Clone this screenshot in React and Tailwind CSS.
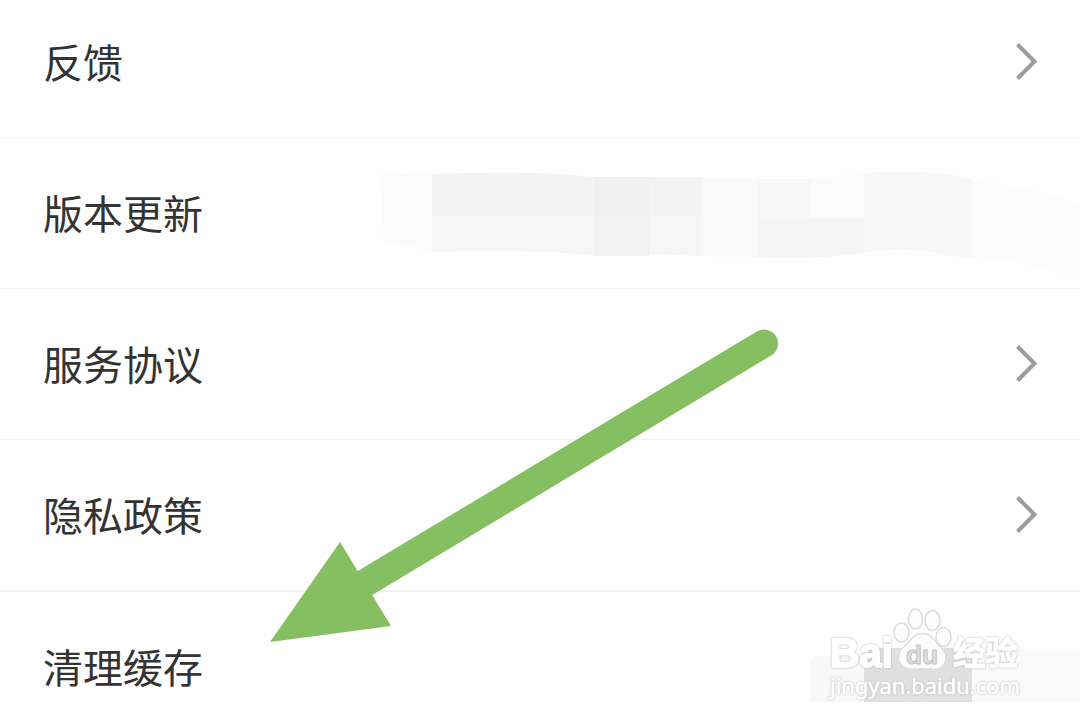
import React from "react";

const items = [
  { label: "反馈", arrow: true },
  { label: "版本更新", redacted: true },
  { label: "服务协议", arrow: true },
  { label: "隐私政策", arrow: true, thick: true },
  { label: "清理缓存" },
];

const Chevron = () => (
  <svg width="26" height="42" viewBox="0 0 26 42" fill="none" className="mr-[40px] shrink-0">
    <path d="M3.500 3.500L20.500 20.500L3.500 37.500" stroke="#9c9c9c" strokeWidth="4" />
  </svg>
);

// Smudged area hiding the version number
const VersionMask = () => (
  <svg width="702" height="120" viewBox="378 153 702 120" className="shrink-0">
    <path d="M380 175L432 173V250L384 242Z" fill="#fbfbfb" />
    <path d="M432 174Q500 171 560 174L594 177V215H432Z" fill="#f3f3f3" />
    <path d="M432 215H594V255Q520 249 432 252Z" fill="#f6f6f6" />
    <path d="M594 177H649V216H594Z" fill="#f0f0f0" />
    <path d="M594 216H649V256H594Z" fill="#f2f2f2" />
    <path d="M649 177H702V216H649Z" fill="#f3f3f3" />
    <path d="M649 216H702V256L649 254Z" fill="#f6f6f6" />
    <path d="M702 177L757 179V257L702 256Z" fill="#fafafa" />
    <path d="M757 179H811V218H757Z" fill="#f7f7f7" />
    <path d="M811 179L864 174V218H811Z" fill="#fbfbfb" />
    <path d="M757 218H864V253Q810 260 757 257Z" fill="#f5f5f5" />
    <path d="M864 173Q930 169 972 179V257L948 256Q920 246 864 252Z" fill="#f7f7f7" />
    <path d="M972 181Q1035 186 1080 205V273L1060 273Q1020 261 972 257Z" fill="#fcfcfc" />
  </svg>
);

const SettingRow = ({ label, arrow, redacted, thick }) => (
  <div
    className={`flex items-center justify-between pl-[43px] ${
      thick ? "h-[152px] border-b-2 border-[#f1f1f1]" : "h-[151px] border-b border-[#f1f1f1]"
    }`}
  >
    <span className="pb-[2px] text-[40px] leading-[60px] text-[#333333]">{label}</span>
    {arrow && <Chevron />}
    {redacted && <VersionMask />}
  </div>
);

const GuideArrow = () => (
  <svg width="1080" height="724" viewBox="0 0 1080 724" className="absolute left-0 top-0">
    <path d="M764 343.5L360 586" stroke="#86bf61" strokeWidth="28" strokeLinecap="round" />
    <path d="M340 542L391 626L270 642Z" fill="#86bf61" />
  </svg>
);

const Watermark = () => (
  <svg width="280" height="130" viewBox="800 594 280 130" className="absolute left-[800px] top-[594px]">
    <path d="M816 656H864V702H810V662Z" fill="#f8f8f8" />
    <path d="M972 649H1080V702H972Z" fill="#fafafa" />
    <path d="M864 648H972V702H864Z" fill="#e0e0e0" />
    <g fill="#fdfdfd" stroke="#dcdcdc" strokeWidth="1.5">
      <ellipse cx="901.500" cy="632.500" rx="7.500" ry="9.500" />
      <ellipse cx="915.500" cy="619" rx="7" ry="10" />
      <ellipse cx="932.500" cy="620.500" rx="7.500" ry="10" />
      <ellipse cx="943.500" cy="637" rx="7.500" ry="9.500" />
      <path d="M922 633.500C914 633.500 911 640 906 645C901 649 898 652 898.500 658C899 667 906 670 914 669L931 669C940 671 946 665 946 657C946 651 941 648 937 643C932 637 930 633.500 922 633.500Z" />
    </g>
    <g fill="#ffffff" stroke="#ffffff" strokeLinejoin="round" className="drop-shadow-[0_0_1px_#b8b8b8]">
      <text x="830" y="667" fontSize="41" fontWeight="700" strokeWidth="1.800" textLength="63" lengthAdjust="spacingAndGlyphs" fontFamily="'Liberation Sans', sans-serif">Bai</text>
      <text x="953" y="665" fontSize="33" fontWeight="700" strokeWidth="1" textLength="65" lengthAdjust="spacingAndGlyphs" fontFamily="'Noto Sans CJK SC', sans-serif">经验</text>
      <text x="830" y="694" fontSize="22" strokeWidth="0.500" textLength="190" lengthAdjust="spacingAndGlyphs" fontFamily="'Noto Sans', sans-serif">jingyan.baidu.com</text>
    </g>
    <text
      x="906"
      y="663.500"
      fontSize="26"
      fontWeight="700"
      fill="#dedede"
      stroke="#c4c4c4"
      strokeWidth="1"
      textLength="32"
      lengthAdjust="spacingAndGlyphs"
      fontFamily="'Liberation Sans', sans-serif"
    >
      du
    </text>
  </svg>
);

export default function App() {
  return (
    <div className="relative h-[724px] w-[1080px] overflow-hidden bg-[#fefefe] font-['Noto_Sans_CJK_SC',sans-serif]">
      <div className="-mt-[13px] flex flex-col">
        {items.map((item) => (
          <SettingRow key={item.label} {...item} />
        ))}
      </div>
      <Watermark />
      <GuideArrow />
    </div>
  );
}
